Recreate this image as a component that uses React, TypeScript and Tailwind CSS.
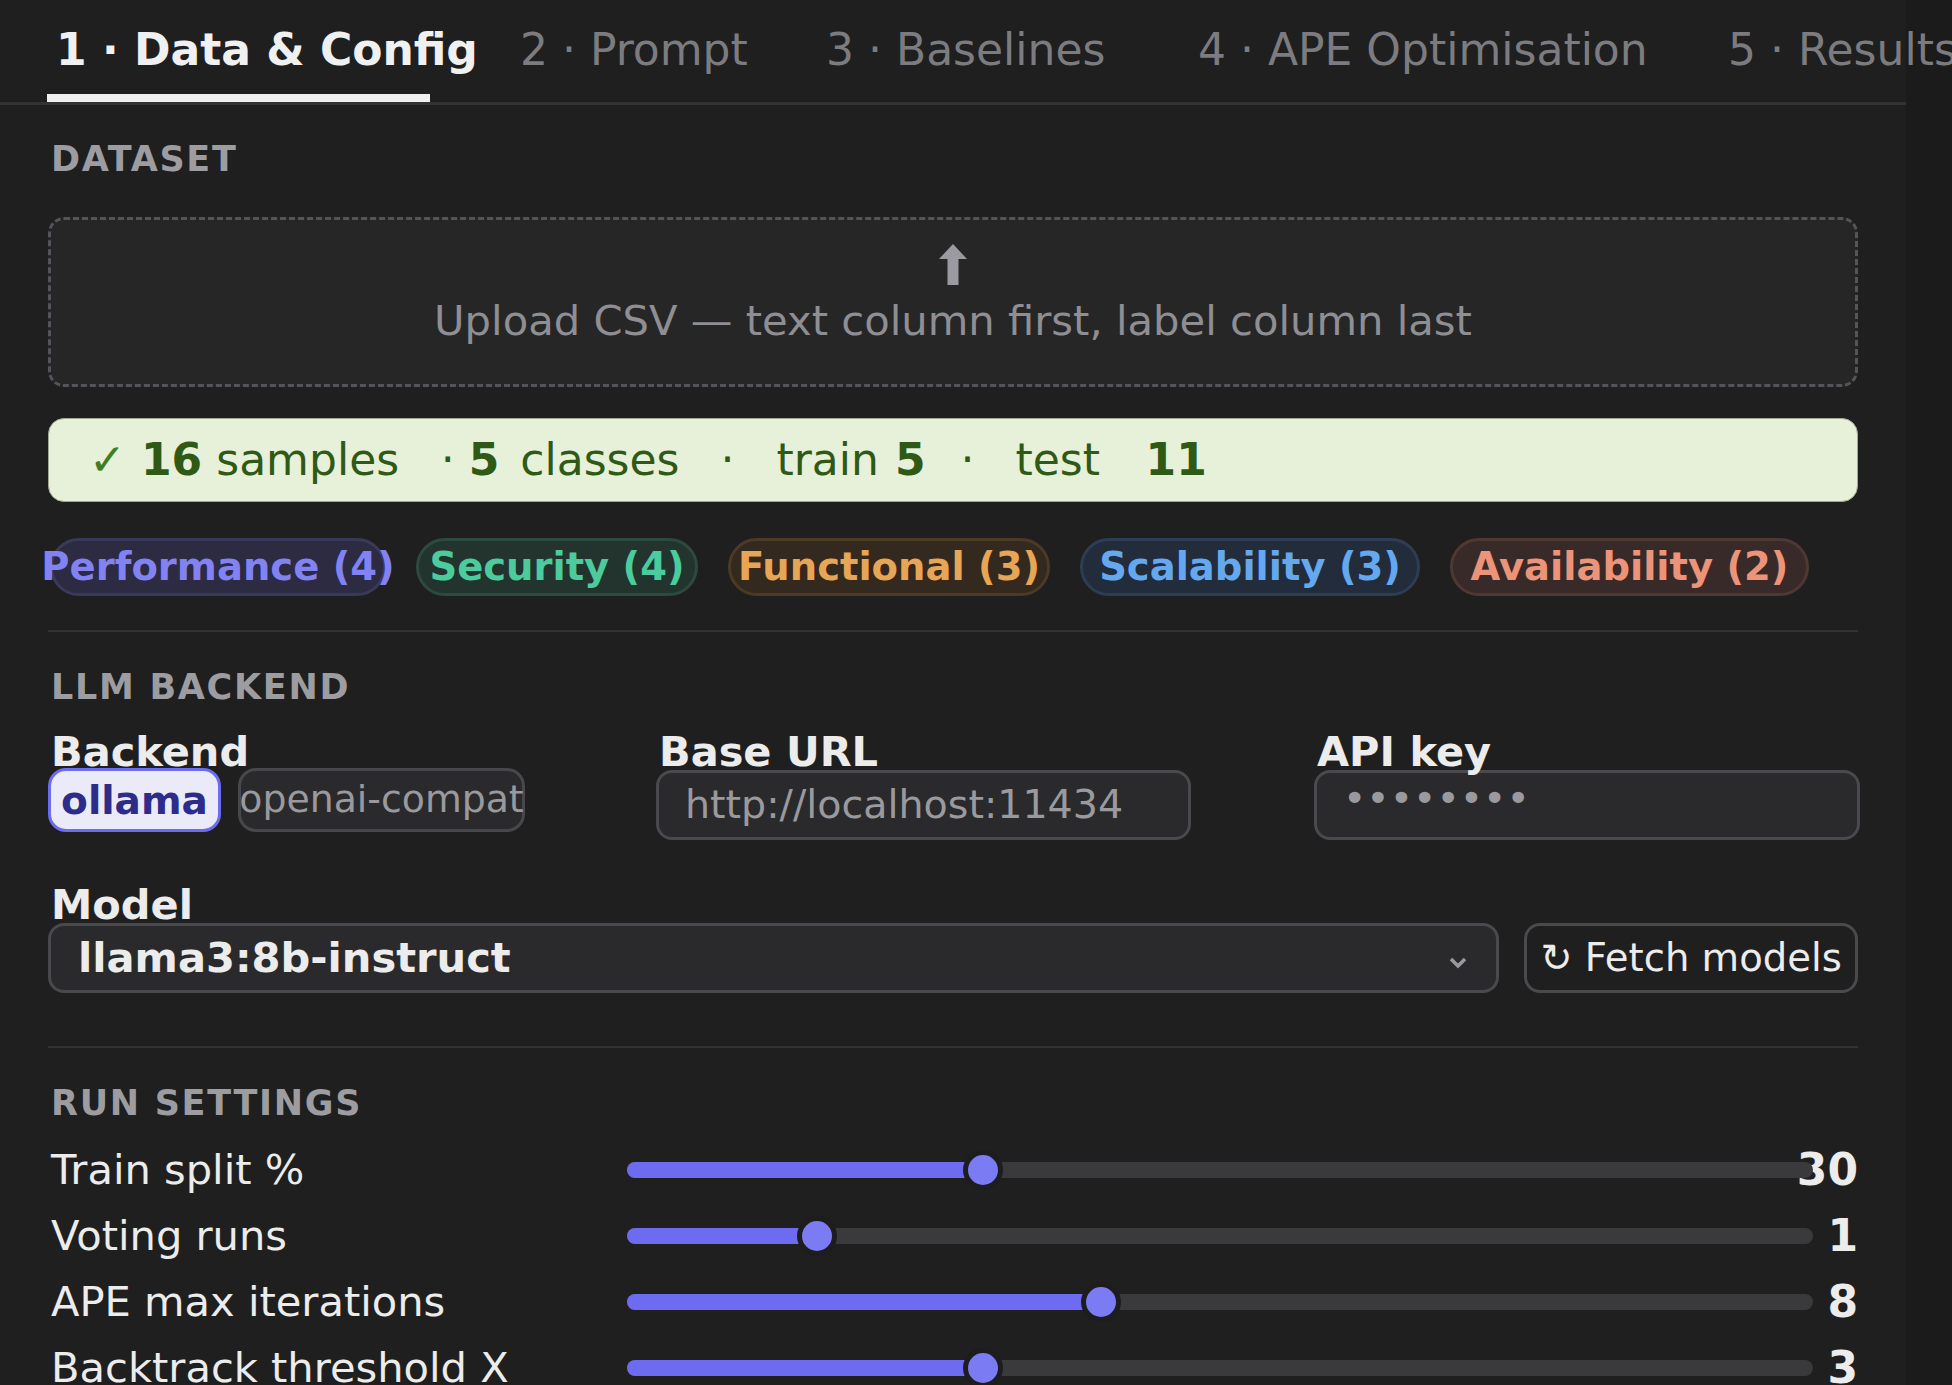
import React from "react";

const tabs = [
  { label: "1 · Data & Config", box: "w-[473px]", active: true },
  { label: "2 · Prompt", box: "w-[306px]", active: false },
  { label: "3 · Baselines", box: "w-[372px]", active: false },
  { label: "4 · APE Optimisation", box: "w-[530px]", active: false },
  { label: "5 · Results", box: "w-[300px]", active: false },
];

const chips = [
  { label: "Performance (4)", cls: "w-[336px] border-[#3a395a] bg-[#2c2b42] text-[#8282f2]" },
  { label: "Security (4)", cls: "w-[282px] border-[#2c4a3e] bg-[#23342e] text-[#4ccb9e]" },
  { label: "Functional (3)", cls: "w-[322px] border-[#4c3a26] bg-[#34291e] text-[#e6a655]" },
  { label: "Scalability (3)", cls: "w-[340px] border-[#2c3e56] bg-[#232c3a] text-[#64a8f0]" },
  { label: "Availability (2)", cls: "w-[359px] border-[#503832] bg-[#382a28] text-[#eb947a]" },
];

const sliders = [
  { label: "Train split %", value: 30, pct: 30 },
  { label: "Voting runs", value: 1, pct: 16 },
  { label: "APE max iterations", value: 8, pct: 40 },
  { label: "Backtrack threshold X", value: 3, pct: 30 },
];

function SectionTitle({ children }: { children: React.ReactNode }) {
  return (
    <div className="pl-[3px] text-[35px] font-bold uppercase leading-[42px] tracking-[1.7px] text-[#9c9ca1]">
      {children}
    </div>
  );
}

function FieldLabel({ children }: { children: React.ReactNode }) {
  return (
    <div className="whitespace-nowrap pl-[3px] pt-[2px] text-[41.5px] font-bold leading-[36px] text-[#ececec]">
      {children}
    </div>
  );
}

function SliderRow({ label, value, pct }: { label: string; value: number; pct: number }) {
  return (
    <div className="flex h-[66px] items-center">
      <div className="w-[579px] shrink-0 whitespace-nowrap pl-[3px] text-[41.6px] leading-[48px] text-[#ececec]">
        {label}
      </div>
      <div className="relative h-[16px] flex-1 rounded-full bg-[#3a3a3c]">
        <div className="h-full rounded-full bg-[#6d6cf0]" style={{ width: `${pct}%` }} />
        <div
          className="absolute top-1/2 h-[40px] w-[40px] -translate-x-1/2 -translate-y-1/2 rounded-full border-[5px] border-[#1d1d1f] bg-[#7b7bf3]"
          style={{ left: `${pct}%` }}
        />
      </div>
      <div className="flex w-[45px] shrink-0 justify-end whitespace-nowrap text-[44px] font-bold leading-[48px] text-[#ececec]">
        {value}
      </div>
    </div>
  );
}

export default function App() {
  return (
    <div className="h-[1385px] w-full overflow-hidden bg-[#1b1b1b] font-['DejaVu_Sans',sans-serif]">
      <div className="h-full w-[1906px] bg-[#1f1f1f]">
        {/* tabs */}
        <nav className="flex h-[105px] border-b-[3px] border-[#333335] pl-[47px]">
          {tabs.map((t) => (
            <div key={t.label} className={`flex shrink-0 flex-col pt-[24px] ${t.box}`}>
              <span
                className={
                  t.active
                    ? "whitespace-nowrap pl-[9px] text-[44px] font-bold leading-[52px] text-[#f0f0f0]"
                    : "whitespace-nowrap text-[44px] leading-[52px] text-[#7c7c80]"
                }
              >
                {t.label}
              </span>
              {t.active && <div className="mt-[18px] h-[8px] w-[383px] bg-[#f0f0f0]" />}
            </div>
          ))}
        </nav>

        <div className="px-[48px]">
          {/* dataset */}
          <div className="mt-[33px]">
            <SectionTitle>Dataset</SectionTitle>
          </div>

          <div className="mt-[37px] flex h-[170px] flex-col items-center rounded-[16px] border-[3px] border-dashed border-[#54545a] bg-[#262627] pt-[24px]">
            <svg width="28" height="41" viewBox="0 0 28 41">
              <polygon points="14,0 28,15 0,15" fill="#9a9aa0" />
              <rect x="8.5" y="14" width="11" height="27" fill="#9a9aa0" />
            </svg>
            <div className="mt-[12px] whitespace-nowrap text-[41.7px] leading-[48px] text-[#8e8e93]">
              Upload CSV — text column first, label column last
            </div>
          </div>

          <div className="mt-[31px] flex h-[84px] items-center whitespace-nowrap rounded-[16px] border border-[#a3a894] bg-[#e7f0d9] text-[44px] leading-[52px] text-[#2f5a16]">
            <span className="ml-[40px] w-[52px] text-[#3f7f22]">✓</span>
            <span className="font-bold">16</span>
            <span className="ml-[14px]">samples</span>
            <span className="ml-[41.5px]">·</span>
            <span className="ml-[14px] font-bold">5</span>
            <span className="ml-[21px]">classes</span>
            <span className="ml-[41px]">·</span>
            <span className="ml-[42px]">train</span>
            <span className="ml-[16px] font-bold">5</span>
            <span className="ml-[35px]">·</span>
            <span className="ml-[41px]">test</span>
            <span className="ml-[45.5px] font-bold">11</span>
          </div>

          <div className="mt-[36px] flex gap-[30px] pl-[2px]">
            {chips.map((c) => (
              <div
                key={c.label}
                className={`flex h-[58px] shrink-0 items-center justify-center whitespace-nowrap rounded-full border-[3px] text-[38.5px] font-bold leading-none ${c.cls}`}
              >
                {c.label}
              </div>
            ))}
          </div>

          <div className="mt-[34px] h-[2px] bg-[#333335]" />

          {/* llm backend */}
          <div className="mt-[34px]">
            <SectionTitle>LLM Backend</SectionTitle>
          </div>

          <div className="mt-[24px] grid grid-cols-[485px_535px_546px] gap-x-[123px]">
            <div>
              <FieldLabel>Backend</FieldLabel>
              <div className="-mt-[2px] flex gap-[17px]">
                <div className="flex h-[64px] w-[173px] shrink-0 items-center justify-center whitespace-nowrap rounded-[18px] border-[3px] border-[#6c6cf0] bg-[#eaeaf9] text-[39px] font-bold leading-none text-[#2c2c8a]">
                  ollama
                </div>
                <div className="flex h-[64px] w-[287px] shrink-0 items-center justify-center whitespace-nowrap rounded-[18px] border-[3px] border-[#48484c] bg-[#2a2a2d] text-[37.8px] leading-none text-[#9a9a9e]">
                  openai-compat
                </div>
              </div>
            </div>
            <div>
              <FieldLabel>Base URL</FieldLabel>
              <div className="flex h-[70px] items-center whitespace-nowrap rounded-[16px] border-[3px] border-[#4a4a4e] bg-[#2a2a2d] pl-[26px] text-[39.6px] leading-none text-[#9a9a9e]">
                http://localhost:11434
              </div>
            </div>
            <div>
              <FieldLabel>API key</FieldLabel>
              <div className="flex h-[70px] items-center rounded-[16px] border-[3px] border-[#4a4a4e] bg-[#2a2a2d] pb-[12px] pl-[26px] text-[39.6px] leading-none text-[#9a9a9e]">
                ••••••••
              </div>
            </div>
          </div>

          <div className="mt-[45px]">
            <FieldLabel>Model</FieldLabel>
          </div>
          <div className="flex gap-[25px]">
            <div className="flex h-[70px] w-[1451px] shrink-0 items-center justify-between rounded-[16px] border-[3px] border-[#4a4a4e] bg-[#2a2a2d] pl-[27px] pr-[28px]">
              <span className="whitespace-nowrap text-[41.6px] font-bold leading-none text-[#ececec]">llama3:8b-instruct</span>
              <svg width="20" height="13" viewBox="0 0 20 13" className="mt-[8px]">
                <polyline points="3,3 10,10 17,3" fill="none" stroke="#9a9a9e" strokeWidth="3.5" />
              </svg>
            </div>
            <button className="flex h-[70px] flex-1 items-center justify-center whitespace-nowrap rounded-[16px] border-[3px] border-[#4a4a4e] bg-[#1f1f1f] text-[38.6px] leading-none text-[#ececec]">
              ↻ Fetch models
            </button>
          </div>

          <div className="mt-[53px] h-[2px] bg-[#333335]" />

          {/* run settings */}
          <div className="mt-[34px]">
            <SectionTitle>Run Settings</SectionTitle>
          </div>

          <div className="mt-[13px]">
            {sliders.map((s) => (
              <SliderRow key={s.label} label={s.label} value={s.value} pct={s.pct} />
            ))}
          </div>
        </div>
      </div>
    </div>
  );
}
